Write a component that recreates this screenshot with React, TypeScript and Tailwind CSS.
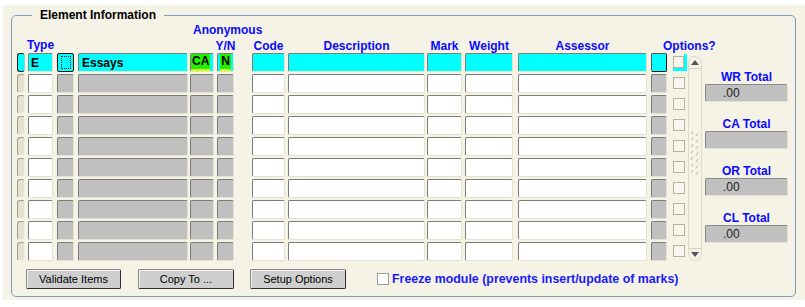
import React from 'react';

type Kind = 'ind' | 'white' | 'gray' | 'lov' | 'btn' | 'chk';

const cols: { key: string; cls: string; kind: Kind; label?: string }[] = [
  { key: 'ind', cls: 'w-[8px]', kind: 'ind' },
  { key: 'type', cls: 'w-[25px] ml-[3px]', kind: 'white', label: 'Type' },
  { key: 'lov', cls: 'w-[17px] ml-[4px]', kind: 'lov' },
  { key: 'name', cls: 'w-[110px] ml-[4px]', kind: 'gray' },
  { key: 'ca', cls: 'w-[24px] ml-[2px]', kind: 'gray' },
  { key: 'yn', cls: 'w-[17px] ml-[3px]', kind: 'gray', label: 'Y/N' },
  { key: 'code', cls: 'w-[33px] ml-[18px]', kind: 'white', label: 'Code' },
  { key: 'desc', cls: 'w-[137px] ml-[3px]', kind: 'white', label: 'Description' },
  { key: 'mark', cls: 'w-[35px] ml-[2px]', kind: 'white', label: 'Mark' },
  { key: 'weight', cls: 'w-[48px] ml-[3px]', kind: 'white', label: 'Weight' },
  { key: 'assessor', cls: 'w-[129px] ml-[5px]', kind: 'white', label: 'Assessor' },
  { key: 'opt', cls: 'w-[16px] ml-[4px]', kind: 'btn', label: 'Options?' },
  { key: 'chk', cls: 'w-[12px] ml-[6px]', kind: 'chk' },
];

const inset =
  'h-[19px] rounded-[2px] border border-t-[#7c7c7c] border-l-[#7c7c7c] border-b-[#e4e2cf] border-r-[#e4e2cf]';

function Cell({ kind, first, colKey }: { kind: Kind; first: boolean; colKey: string }) {
  if (kind === 'ind') {
    return first ? (
      <div className="h-[19px] rounded-[3px] bg-[#00ffff] border border-[#1a1a1a] border-r-[#7fd8d8]" />
    ) : (
      <div className="h-[19px] rounded-[3px] bg-[#e3e2d0] border border-t-[#a09f8c] border-l-[#a09f8c] border-b-[#f2f1e4] border-r-[#f2f1e4]" />
    );
  }
  if (kind === 'chk') {
    return (
      <div className="h-[19px] flex items-center">
        <div
          className={
            first
              ? 'w-[14px] h-[17px] -mr-[2px] flex items-start border-r-[3px] border-b-[3px] border-[#00ffff]'
              : 'w-[12px] h-[17px] flex items-start'
          }
        >
          <div className="w-[12px] h-[12px] mt-[2px] border border-[#b5b49a] bg-[#f8f7ee]" />
        </div>
      </div>
    );
  }
  if (kind === 'lov') {
    return first ? (
      <div className="h-[19px] rounded-[2px] bg-[#00ffff] border border-[#111] flex items-center justify-center">
        <div className="w-[10px] h-[13px] border border-dotted border-[#111]" />
      </div>
    ) : (
      <div className={`${inset} bg-[#c0c0c0]`} />
    );
  }
  if (kind === 'btn') {
    return first ? (
      <div className="h-[19px] rounded-[2px] bg-[#00ffff] border border-[#555] border-b-[#111] border-r-[#111]" />
    ) : (
      <div className={`${inset} bg-[#c0c0c0]`} />
    );
  }
  const bg = first ? 'bg-[#00ffff]' : kind === 'gray' ? 'bg-[#c0c0c0]' : 'bg-white';
  let content: React.ReactNode = null;
  if (first && colKey === 'type') content = <span className="pl-[2px]">E</span>;
  if (first && colKey === 'name') content = <span className="pl-[3px]">Essays</span>;
  if (first && colKey === 'ca')
    content = <span className="bg-[#22f000] border-b-[2px] border-[#d4ff00] px-[1px] leading-[15px]">CA</span>;
  if (first && colKey === 'yn')
    content = (
      <div className="w-full flex justify-center">
        <span className="bg-[#22f000] border-b-[2px] border-[#d4ff00] px-[1px] leading-[15px]">N</span>
      </div>
    );
  return (
    <div className={`${inset} ${bg} flex items-center text-[12px] font-bold text-black overflow-hidden`}>{content}</div>
  );
}

function Row({ first }: { first: boolean }) {
  return (
    <div className="flex h-[19px]">
      {cols.map((c) => (
        <div key={c.key} className={`${c.cls} shrink-0`}>
          <Cell kind={c.kind} first={first} colKey={c.key} />
        </div>
      ))}
    </div>
  );
}

function HeaderLabel({ colKey, label }: { colKey: string; label?: string }) {
  if (!label) return null;
  if (colKey === 'type') return <span className="-ml-[1px] pt-[1px] whitespace-nowrap">{label}</span>;
  if (colKey === 'opt') return <span className="ml-[12px] pt-[2px] whitespace-nowrap">{label}</span>;
  return (
    <div className="w-full flex justify-center pt-[2px]">
      <span className="whitespace-nowrap">{label}</span>
    </div>
  );
}

function Scrollbar() {
  const dashes = [0, 1, 2, 3, 4, 5, 6];
  return (
    <div className="w-[14px] h-[205px] mt-[40px] ml-[3px] rounded-t-[7px] rounded-b-[7px] border border-[#dddbc6] bg-[#f4f3e6] flex flex-col">
      <div className="h-[12px] border-b border-[#d4d2bc] flex items-center justify-center">
        <svg width="8" height="5" viewBox="0 0 8 5">
          <polygon points="4,0 8,5 0,5" fill="#555" />
        </svg>
      </div>
      <div className="flex-1 flex justify-center pt-[61px]">
        <svg width="10" height="46" viewBox="0 0 10 46">
          {dashes.map((i) => (
            <g key={i} stroke="#b9b7a2" strokeWidth="1">
              <line x1="1" y1={i * 6.5 + 4} x2="3" y2={i * 6.5 + 1} />
              <line x1="6" y1={i * 6.5 + 6} x2="8" y2={i * 6.5 + 3} />
            </g>
          ))}
        </svg>
      </div>
      <div className="h-[12px] border-t border-[#d4d2bc] flex items-center justify-center">
        <svg width="8" height="5" viewBox="0 0 8 5">
          <polygon points="0,0 8,0 4,5" fill="#555" />
        </svg>
      </div>
    </div>
  );
}

function Totals() {
  const items = [
    { label: 'WR Total', value: '.00' },
    { label: 'CA Total', value: '' },
    { label: 'OR Total', value: '.00' },
    { label: 'CL Total', value: '.00' },
  ];
  return (
    <div className="ml-[3px] mt-[54px] w-[83px] flex flex-col gap-[15px]">
      {items.map((t) => (
        <div key={t.label} className="flex flex-col">
          <div className="h-[14px] leading-[14px] text-center text-[12px] font-bold text-[#0a0aff]">{t.label}</div>
          <div className="h-[18px] bg-[#c0c0c0] border border-t-[#8a8a8a] border-l-[#8a8a8a] border-b-[#e4e2cf] border-r-[#e4e2cf] rounded-[2px] pl-[17px] text-[12px] leading-[16px] text-[#222]">
            {t.value}
          </div>
        </div>
      ))}
    </div>
  );
}

function Button({ children, cls }: { children: React.ReactNode; cls: string }) {
  return (
    <button
      className={`${cls} h-[20px] bg-[#cfcfcf] border border-[#8a8a8a] border-b-[#2e2e2e] border-r-[#2e2e2e] rounded-[2px] shadow-[inset_1px_1px_0_#f2f2f2] text-[11px] text-black flex items-center justify-center`}
    >
      {children}
    </button>
  );
}

export default function App() {
  const rows = Array.from({ length: 10 }, (_, i) => i);
  return (
    <div className="bg-white w-[805px] h-[307px] pt-[5px] pl-[3px] font-['Liberation_Sans',Arial,sans-serif]">
      <div className="bg-[#f4f3e6] w-[802px] h-[295px] pt-[10px] pl-[8px]">
        <div className="relative w-[785px] h-[282px] border border-[#7f9db9] rounded-[5px]">
          <span className="absolute left-[20px] -top-[9px] px-[8px] bg-[#f4f3e6] text-[12px] leading-[16px] font-bold text-black">
            Element Information
          </span>

          <div className="flex items-start">
            <div className="ml-[5px] flex flex-col">
              <div className="h-[37px] flex flex-col text-[12px] font-bold text-[#0a0aff]">
                <div className="h-[14px] mt-[7px] leading-[14px] ml-[176px] whitespace-nowrap">Anonymous</div>
                <div className="h-[16px] flex leading-[14px]">
                  {cols.map((c) => (
                    <div key={c.key} className={`${c.cls} shrink-0 flex`}>
                      <HeaderLabel colKey={c.key} label={c.label} />
                    </div>
                  ))}
                </div>
              </div>
              <div className="flex flex-col gap-[2px]">
                {rows.map((i) => (
                  <Row key={i} first={i === 0} />
                ))}
              </div>
            </div>
            <Scrollbar />
            <Totals />
          </div>

          <div className="flex items-center mt-[8px] ml-[14px]">
            <Button cls="w-[95px]">Validate Items</Button>
            <Button cls="w-[96px] ml-[17px]">Copy To ...</Button>
            <Button cls="w-[96px] ml-[16px]">Setup Options</Button>
            <div className="ml-[31px] w-[12px] h-[12px] border border-[#9c9c9c] bg-white" />
            <span className="ml-[3px] text-[12.4px] font-bold text-[#1a1aff] whitespace-nowrap">
              Freeze module (prevents insert/update of marks)
            </span>
          </div>
        </div>
      </div>
    </div>
  );
}
